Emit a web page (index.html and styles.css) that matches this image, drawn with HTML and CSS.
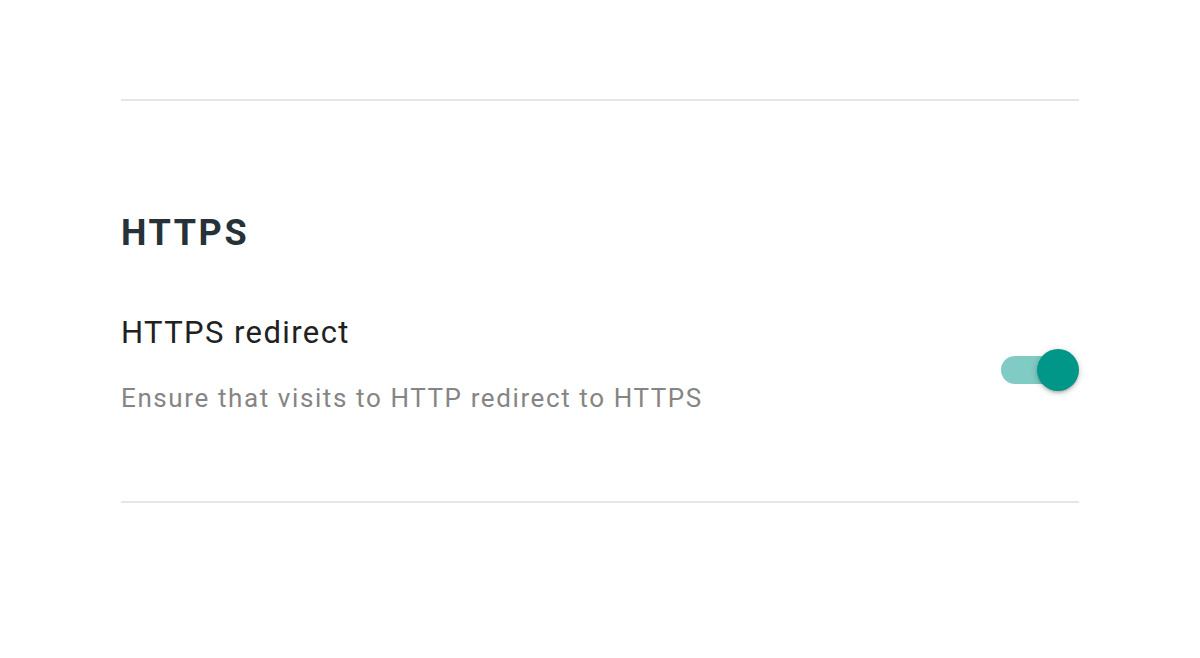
FILE: index.html
```html
<!DOCTYPE html>
<html>
<head>
<meta charset="utf-8">
<link rel="stylesheet" href="styles.css">
</head>
<body>
<div class="page">
  <div class="divider"></div>
  <section class="section">
    <h2 class="section-title">HTTPS</h2>
    <div class="setting">
      <div class="setting-text">
        <div class="setting-label">HTTPS redirect</div>
        <div class="setting-desc">Ensure that visits to HTTP redirect to HTTPS</div>
      </div>
      <div class="switch" role="switch" aria-checked="true">
        <div class="switch-track"></div>
        <div class="switch-thumb"></div>
      </div>
    </div>
  </section>
  <div class="divider"></div>
</div>
</body>
</html>
```
FILE: styles.css
```css
html, body {
  margin: 0;
  padding: 0;
  background: #ffffff;
}
body {
  font-family: Roboto, "Noto Sans", Arial, sans-serif;
}
.page {
  margin: 0 121px;
  padding-top: 99px;
}
.divider {
  height: 2px;
  background: #e6e6e6;
}
.section {
  padding-top: 108px;
  padding-bottom: 85px;
}
.section-title {
  margin: 0;
  font-size: 36px;
  line-height: 48px;
  font-weight: 700;
  letter-spacing: 2.6px;
  color: #263238;
}
.setting {
  display: flex;
  align-items: flex-start;
  justify-content: space-between;
  margin-top: 56px;
}
.setting-label {
  font-size: 31px;
  line-height: 40px;
  letter-spacing: 1.4px;
  color: #212121;
}
.setting-desc {
  margin-top: 27px;
  font-size: 26px;
  line-height: 36px;
  letter-spacing: 1.6px;
  color: #858585;
}
.switch {
  position: relative;
  width: 78px;
  height: 42px;
  margin-top: 36px;
}
.switch-track {
  position: absolute;
  left: 0;
  top: 7px;
  width: 64px;
  height: 28px;
  border-radius: 14px;
  background: #80cbc4;
}
.switch-thumb {
  position: absolute;
  right: 0;
  top: 0;
  width: 42px;
  height: 42px;
  border-radius: 50%;
  background: #009688;
  box-shadow: 0 3px 3px -2px rgba(0,0,0,0.2), 0 2px 4px 0 rgba(0,0,0,0.14), 0 1px 8px 0 rgba(0,0,0,0.12);
}
```
